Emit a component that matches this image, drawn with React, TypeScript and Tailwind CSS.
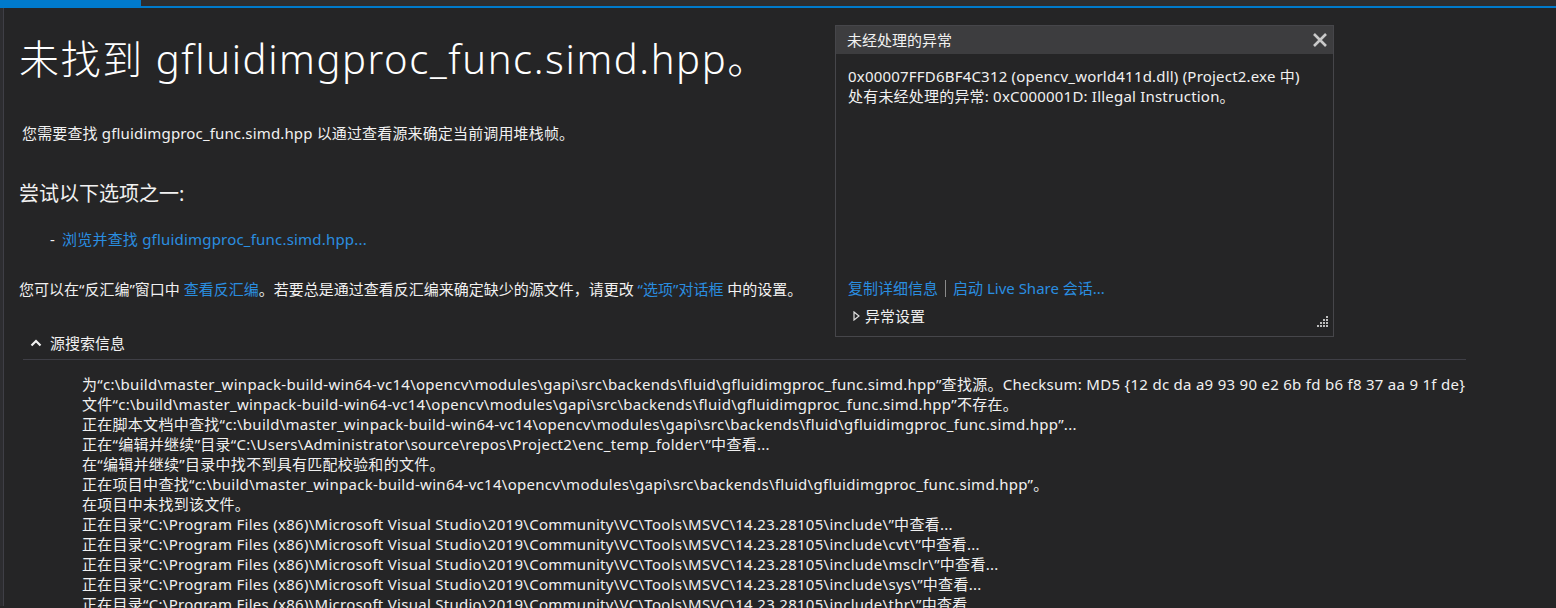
import React from "react";

const font = "font-['Noto_Sans','Noto_Sans_CJK_SC',sans-serif]";
const base =
  "c:\\build\\master_winpack-build-win64-vc14\\opencv\\modules\\gapi\\src\\backends\\fluid\\gfluidimgproc_func.simd.hpp";
const msvc =
  "C:\\Program Files (x86)\\Microsoft Visual Studio\\2019\\Community\\VC\\Tools\\MSVC\\14.23.28105\\include\\";

const lines = [
  `为“${base}”查找源。Checksum: MD5 {12 dc da a9 93 90 e2 6b fd b6 f8 37 aa 9 1f de}`,
  `文件“${base}”不存在。`,
  `正在脚本文档中查找“${base}”...`,
  "正在“编辑并继续”目录“C:\\Users\\Administrator\\source\\repos\\Project2\\enc_temp_folder\\”中查看...",
  "在“编辑并继续”目录中找不到具有匹配校验和的文件。",
  `正在项目中查找“${base}”。`,
  "在项目中未找到该文件。",
  `正在目录“${msvc}”中查看...`,
  `正在目录“${msvc}cvt\\”中查看...`,
  `正在目录“${msvc}msclr\\”中查看...`,
  `正在目录“${msvc}sys\\”中查看...`,
  `正在目录“${msvc}thr\\”中查看...`,
];

const Link = ({ children }: { children: React.ReactNode }) => (
  <span className="text-[#2a8ee0]">{children}</span>
);

const ExceptionPopup = () => (
  <div className="absolute left-[835px] top-[25px] flex h-[312px] w-[499px] flex-col border border-[#46464a] bg-[#252526]">
    <div className="flex h-[28px] items-center justify-between bg-[#3d3d3f] pl-[11px] pr-[5px] text-[15px] text-[#f1f1f1]">
      <span>未经处理的异常</span>
      <svg width="16" height="16" viewBox="0 0 16 16">
        <path d="M2 2L14 14M14 2L2 14" stroke="#c9c9c9" strokeWidth="2.6" />
      </svg>
    </div>
    <div className="px-[12px] pt-[12px] text-[15px] leading-[20px] tracking-[0.2px] text-[#f1f1f1]">
      <div>0x00007FFD6BF4C312 (opencv_world411d.dll) (Project2.exe 中)</div>
      <div>处有未经处理的异常: 0xC000001D: Illegal Instruction。</div>
    </div>
    <div className="mt-auto px-[12px] pb-[8px] text-[15px] leading-[20px]">
      <div className="flex items-center">
        <Link>复制详细信息</Link>
        <span className="mx-[7px] h-[17px] w-px bg-[#8a8a8a]" />
        <Link>启动 Live Share 会话...</Link>
      </div>
      <div className="mt-[6px] flex items-center justify-between text-[#f1f1f1]">
        <div className="flex items-center gap-[5px] pl-[5px]">
          <svg width="7" height="10" viewBox="0 0 7 10">
            <path d="M1 1L6 5L1 9Z" fill="none" stroke="#e0e0e0" strokeWidth="1.2" />
          </svg>
          <span>异常设置</span>
        </div>
        <svg width="12" height="12" viewBox="0 0 12 12" className="-mr-[8px] mt-[12px]">
          <rect x="9" y="0" width="2" height="2" fill="#bdbdbd" />
          <rect x="6" y="3" width="2" height="2" fill="#bdbdbd" />
          <rect x="9" y="3" width="2" height="2" fill="#bdbdbd" />
          <rect x="3" y="6" width="2" height="2" fill="#bdbdbd" />
          <rect x="6" y="6" width="2" height="2" fill="#bdbdbd" />
          <rect x="9" y="6" width="2" height="2" fill="#bdbdbd" />
          <rect x="0" y="9" width="2" height="2" fill="#bdbdbd" />
          <rect x="3" y="9" width="2" height="2" fill="#bdbdbd" />
          <rect x="6" y="9" width="2" height="2" fill="#bdbdbd" />
          <rect x="9" y="9" width="2" height="2" fill="#bdbdbd" />
        </svg>
      </div>
    </div>
  </div>
);

export default function App() {
  return (
    <div className={`relative h-[608px] w-[1556px] overflow-hidden bg-[#252526] text-[#f1f1f1] ${font}`}>
      <div className="flex h-[6px]">
        <div className="w-[141px] bg-[#007acc]" />
        <div className="flex-1 bg-[#2d2d30]" />
      </div>
      <div className="h-[2px] bg-[#007acc]" />
      <div className="flex h-[598px]">
        <div className="w-[3px] bg-[#2d2d30]" />
        <div className="w-px bg-[#3f3f46]" />
        <main className="flex-1 pl-[15px]">
          <h1 className="mt-[27px] text-[40px] font-light leading-[48px] tracking-[1.6px] text-white">
            未找到 gfluidimgproc_func.simd.hpp。
          </h1>
          <p className="mt-[40px] pl-[3px] text-[15px] leading-[20px] tracking-[0.15px]">
            您需要查找 gfluidimgproc_func.simd.hpp 以通过查看源来确定当前调用堆栈帧。
          </p>
          <h2 className="mt-[37px] text-[20px] leading-[28px]">尝试以下选项之一:</h2>
          <div className="mt-[21px] flex pl-[31px] text-[15px] leading-[20px] tracking-[0.2px]">
            <span className="mr-[7px]">-</span>
            <Link>浏览并查找 gfluidimgproc_func.simd.hpp...</Link>
          </div>
          <p className="mt-[30px] text-[15px] leading-[20px]">
            您可以在“反汇编”窗口中 <Link>查看反汇编</Link>。若要总是通过查看反汇编来确定缺少的源文件，请更改{" "}
            <Link>“选项”对话框</Link> 中的设置。
          </p>
          <section className="ml-[4px] mt-[34px] w-[1443px]">
            <div className="flex items-center border-b border-[#3f3f46] pb-[6px] text-[15px] leading-[20px]">
              <svg width="12" height="8" viewBox="0 0 12 8" className="ml-[7px] mr-[8px]">
                <path d="M1.5 6.5L6 2L10.5 6.5" fill="none" stroke="#f1f1f1" strokeWidth="2.2" />
              </svg>
              <span>源搜索信息</span>
            </div>
            <div className="mt-[14px] pl-[59px] text-[15px] leading-[20px] tracking-[0.28px]">
              {lines.map((l, i) => (
                <div key={i} className="whitespace-nowrap">
                  {l}
                </div>
              ))}
            </div>
          </section>
        </main>
      </div>
      <ExceptionPopup />
    </div>
  );
}
